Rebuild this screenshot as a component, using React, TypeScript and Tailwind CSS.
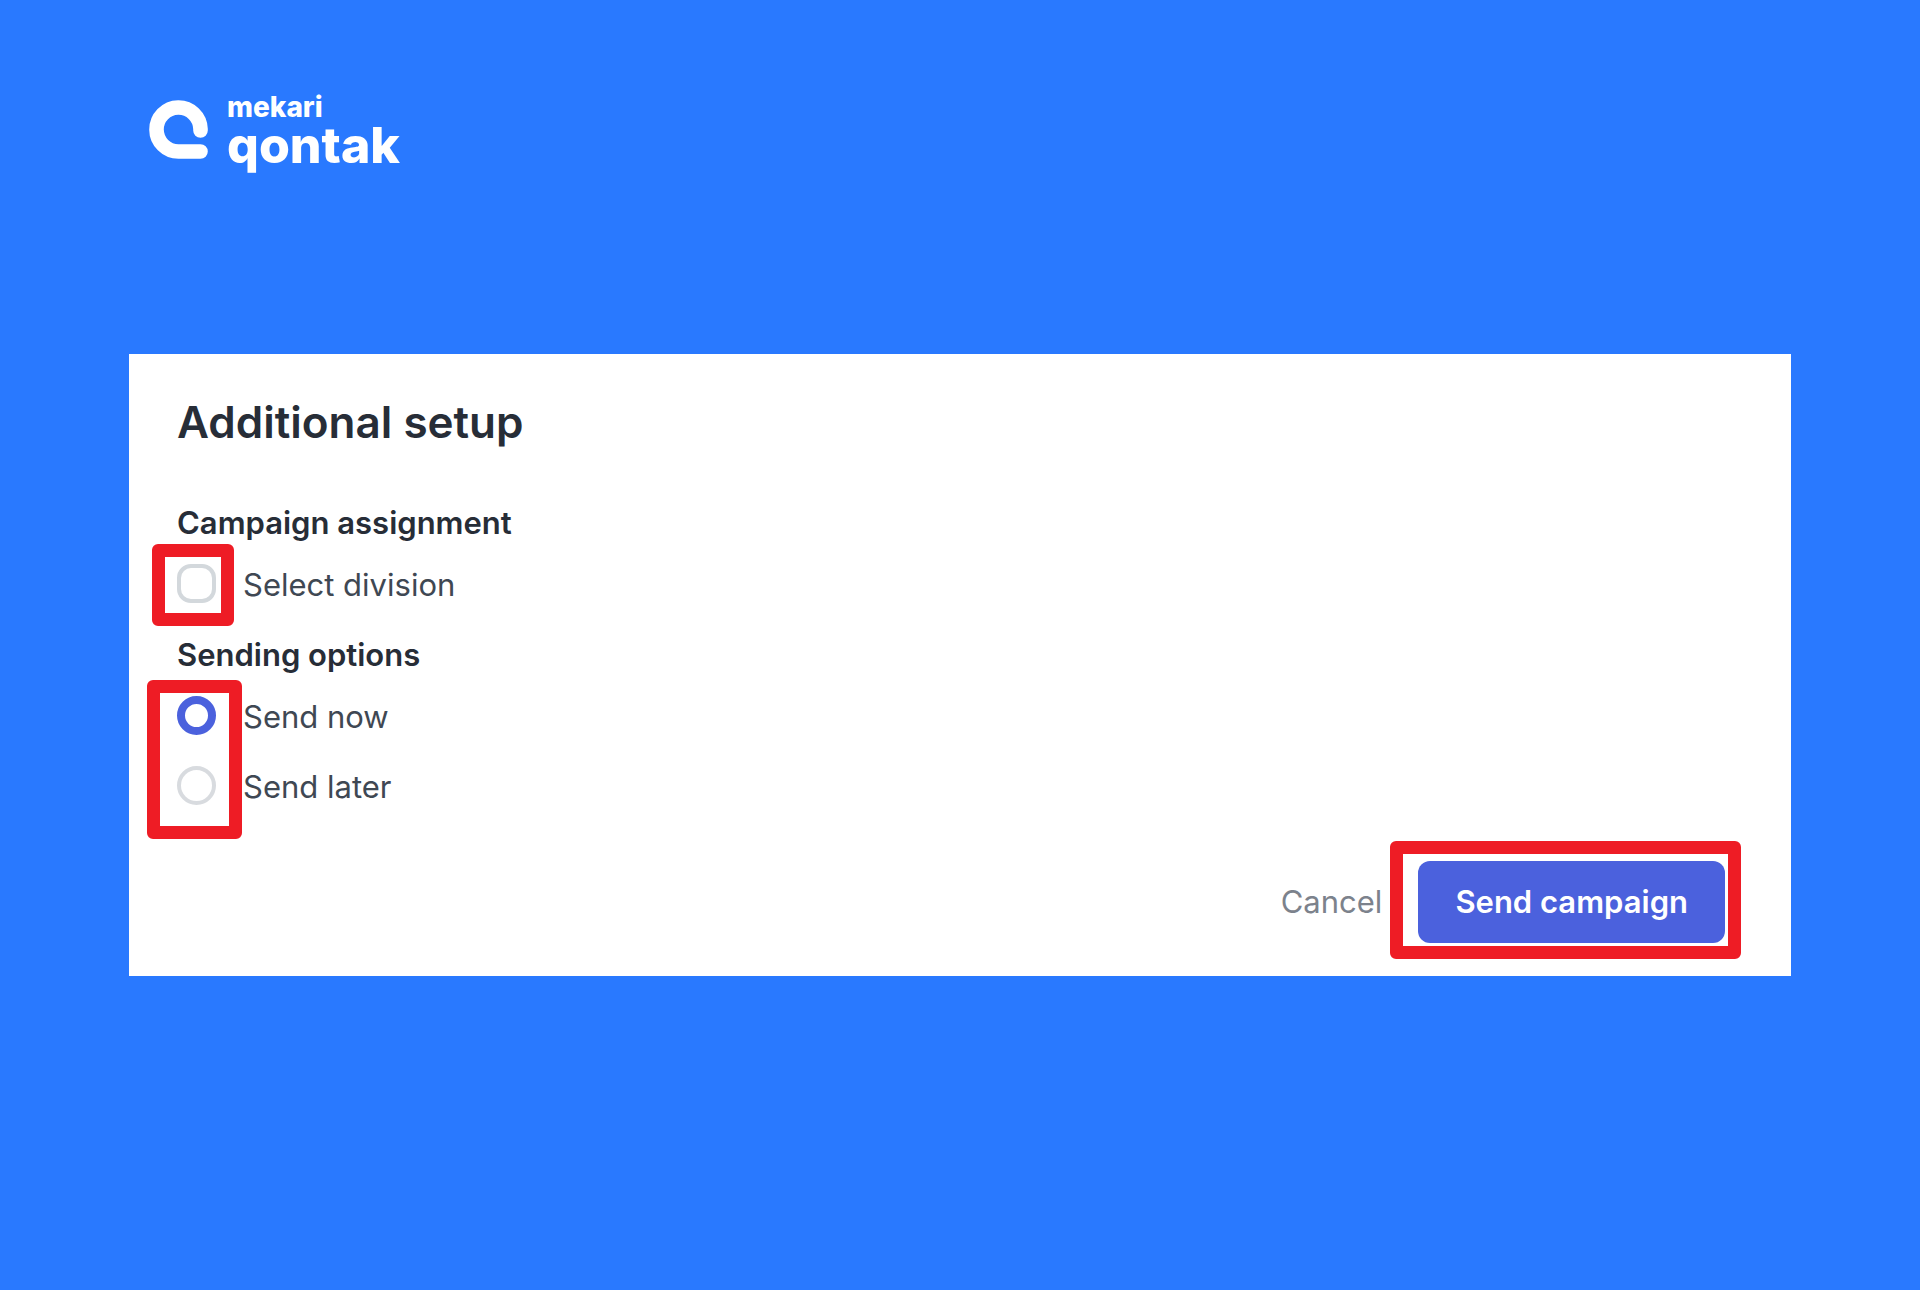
import { useState } from "react";
import type { ReactNode } from "react";

function Logo() {
  return (
    <header className="flex h-24 items-start gap-[18px] pl-5 text-white">
      <svg width="60" height="62" viewBox="0 0 60 62" fill="none" aria-hidden="true" className="mt-7 shrink-0">
        <path
          d="M51.5 31.5V30A22 22 0 1 0 29.5 52.5H51.5"
          stroke="currentColor"
          strokeWidth="14.6"
          strokeLinecap="round"
          strokeLinejoin="round"
        />
      </svg>
      <div className="flex flex-col pt-5 font-extrabold">
        <span className="text-[28px] leading-8">mekari</span>
        <span className="text-[50px] leading-11">qontak</span>
      </div>
    </header>
  );
}

function Highlight({ className }: { className: string }) {
  return (
    <span
      aria-hidden="true"
      className={`pointer-events-none absolute rounded-md border-[13px] border-[#ee1c25] ${className}`}
    />
  );
}

function Section({ title, children }: { title: string; children: ReactNode }) {
  return (
    <fieldset>
      <legend className="text-[31px] leading-[42px] font-semibold">{title}</legend>
      <div className="relative mt-5 flex flex-col items-start gap-7">{children}</div>
    </fieldset>
  );
}

export default function App() {
  const [division, setDivision] = useState(false);
  const [when, setWhen] = useState("now");

  return (
    <main className="min-h-screen bg-[#2979ff] px-[129px] pt-[71px] pb-20 font-['Inter',sans-serif]">
      <Logo />
      <form
        className="mt-[187px] bg-white px-12 pt-10 pb-[33px] text-[#272d37]"
        onSubmit={(event) => event.preventDefault()}
      >
        <h1 className="text-[44px] leading-14 font-semibold">Additional setup</h1>
        <div className="mt-13 flex flex-col gap-7">
          <Section title="Campaign assignment">
            <label className="flex items-start gap-[27px] text-[31px] leading-[42px] text-[#3f4853]">
              <input
                type="checkbox"
                checked={division}
                onChange={(event) => setDivision(event.target.checked)}
                className="size-[39px] appearance-none rounded-[14px] border-4 border-[#d3d8dc] bg-white checked:bg-[#4b61dd]"
              />
              Select division
            </label>
            <Highlight className="-top-5 -left-[25px] size-[82px]" />
          </Section>
          <Section title="Sending options">
            <label className="flex items-start gap-[27px] text-[31px] leading-[42px] text-[#3f4853]">
              <input
                type="radio"
                name="when"
                checked={when === "now"}
                onChange={() => setWhen("now")}
                className="size-[39px] appearance-none rounded-full border-4 border-[#d8dbdf] bg-white checked:border-8 checked:border-[#4b61dd]"
              />
              Send now
            </label>
            <label className="flex items-start gap-[27px] text-[31px] leading-[42px] text-[#3f4853]">
              <input
                type="radio"
                name="when"
                checked={when === "later"}
                onChange={() => setWhen("later")}
                className="size-[39px] appearance-none rounded-full border-4 border-[#d8dbdf] bg-white checked:border-8 checked:border-[#4b61dd]"
              />
              Send later
            </label>
            <Highlight className="-top-4 -left-[30px] h-[159px] w-[95px]" />
          </Section>
        </div>
        <div className="mt-[53px] flex items-center justify-end gap-9 pr-[18px] text-[31px] leading-10">
          <button type="button" className="text-[#7c828c]">
            Cancel
          </button>
          <div className="relative">
            <button type="submit" className="rounded-xl bg-[#4b61dd] px-[37px] py-[21px] font-semibold text-white">
              Send campaign
            </button>
            <Highlight className="-top-5 -right-4 -bottom-4 -left-7" />
          </div>
        </div>
      </form>
    </main>
  );
}
